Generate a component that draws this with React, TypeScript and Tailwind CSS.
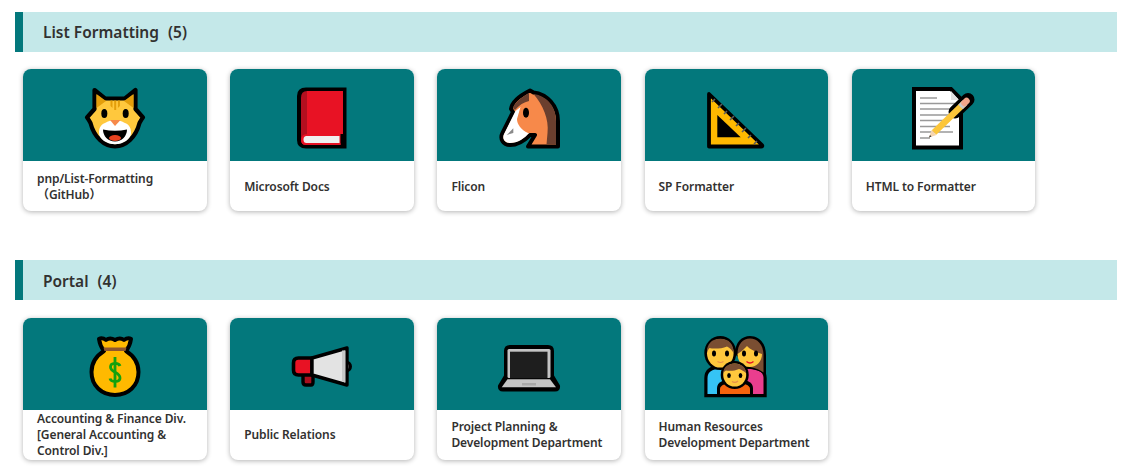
import type { ReactNode } from 'react'

const Svg = ({ children }: { children: ReactNode }) => (
  <svg viewBox="0 0 72 72" className="w-[72px] h-[72px]">
    {children}
  </svg>
)

const CatIcon = () => (
  <Svg>
    <path d="M15.5 11 L26 19.5 H46 L56.5 11 V30 L64 38.5 Q62 41 60.5 44 C57 58 47 67.3 36 67.3 C25 67.3 15 58 11.5 44 Q10 41 8 38.5 L15.5 30 Z" fill="#ffc83d" stroke="#000" strokeWidth="4.2" strokeLinejoin="round" />
    <path d="M17.5 15 L27 22 L17.5 29 Z M54.5 15 L45 22 L54.5 29 Z" fill="#e39e0b" />
    <path d="M31.5 21.5 H33.5 V29 L31.5 27 Z M35.2 21.5 H37.2 V31 H35.2 Z M38.9 21.5 H40.9 V27 L38.9 29 Z" fill="#e39e0b" />
    <ellipse cx="25.3" cy="34.5" rx="3" ry="4.5" fill="#000" />
    <ellipse cx="46.7" cy="34.5" rx="3" ry="4.5" fill="#000" />
    <path d="M36 41 C30 41 29 43 26 44 C21 46 20 50 20 54 C20 60 28 65.3 36 65.3 C44 65.3 52 60 52 54 C52 50 51 46 46 44 C43 43 42 41 36 41 Z" fill="#fff" />
    <path d="M31 41 H41.5 L36 47 Z" fill="#f7894a" />
    <path d="M24 50.5 Q36 53 48 50.5 C48 57 43 62.5 36 62.5 C29 62.5 24 57 24 50.5 Z" fill="#000" />
    <ellipse cx="36" cy="59" rx="6" ry="3" fill="#e8421f" />
  </Svg>
)

const BookIcon = () => (
  <Svg>
    <path d="M20 8.5 H60.5 V69.5 H20 Q11 69.5 11 61 V17 Q11 8.5 20 8.5 Z" fill="#000" />
    <path d="M21 12 H57 V55 H21 Z" fill="#e81224" />
    <path d="M21 12 Q15 12 15 19 V61 Q15 66 20 66 H54.5 V64 H21 L18 61 V58 L21 55 Z" fill="#b30f1f" />
    <path d="M21 55 H54.5 V66 H20 Q15 66 15 61 Q15 55 21 55 Z" fill="#e81224" />
    <path d="M20.5 57 H53.5 V64 H20.5 Q17.5 64 17.5 60.5 Q17.5 57 20.5 57 Z" fill="#f0f0f0" />
  </Svg>
)

const HorseIcon = () => (
  <Svg>
    <path d="M37 11.5 L40.5 13.5 C54 15 65 27 65 42 V67.5 H35 L42 56 H37 C33 60 26 66 17 66 C10 66 6.5 60 9.5 54 L20 33 L18 30 C19 22 28 16 37 11.5 Z" fill="#f7894a" stroke="#000" strokeWidth="4" strokeLinejoin="round" />
    <path d="M40.5 15 C54 17 63 27 63 42 V65.5 H53.5 L54.5 54 C56 40 50 26 40.5 15 Z" fill="#6b3f2e" />
    <path d="M20 29 C22 23 29 18 36 14 V22 C31 23 26 26 22 31 Z" fill="#6b3f2e" />
    <path d="M22.5 32 L27.5 28 L24 40 C24 45 28 51 35 54 H36 C32 59 25 64 17 64 C11 64 9 59 11 55 Z" fill="#fff" />
    <path d="M13.7 56 L20.3 49.3 V54 Z" fill="#8a8a8a" />
    <ellipse cx="33" cy="33.7" rx="3" ry="5" fill="#000" />
  </Svg>
)

const RulerIcon = () => (
  <Svg>
    <path d="M9 15 L62 66 Q63 67.5 61 67.5 H9 Z" fill="#ffb900" stroke="#000" strokeWidth="3.8" strokeLinejoin="round" />
    <path d="M17.3 36 V58.3 H40.7 Z" fill="#000" />
    <path d="M12 23 L15 20 M18 29 L22 25 M24 35 L27 32 M30 41 L34 37 M36 47 L39 44 M42 53 L46 49 M48 59 L51 56 M54 65 L57 62" stroke="#5c5c5c" strokeWidth="1.6" />
  </Svg>
)

const DocIcon = () => (
  <Svg>
    <path d="M6 10 H43 L53 20 V68.5 H6 Z" fill="#fff" stroke="#000" strokeWidth="4" />
    <path d="M43 12 V21 H51 Z" fill="#e1e1e1" />
    <path d="M12 19 H29 M12 24.5 H47 M12 30 H42 M12 36 H47 M12 41.5 H42 M12 47.5 H42 M12 53 H45 M12 59 H22" stroke="#999" strokeWidth="1.7" />
    <path d="M47 33 L60 20.5" stroke="#000" strokeWidth="13" strokeLinecap="round" />
    <path d="M26 53.5 L56 24.5" stroke="#fcc63a" strokeWidth="6.5" />
    <path d="M52.5 28 L57 23.7" stroke="#c9c9c9" strokeWidth="6.5" />
    <path d="M56.5 24 L58.5 22" stroke="#f0a58a" strokeWidth="6.5" strokeLinecap="round" />
    <path d="M23.5 51 L28.5 56 L21 58.5 Z" fill="#f5d5b0" />
    <path d="M22 56 L23.5 57.5 L21 58.5 Z" fill="#333" />
  </Svg>
)

const BagIcon = () => (
  <Svg>
    <path d="M20 11 Q23 9 27 12 Q31 9 36 12 Q41 9 45 12 Q49 9 52 11 Q51 18 47 23 C55 28 59.5 35 59.5 44 C59.5 58 49 67 36 67 C23 67 12.5 58 12.5 44 C12.5 35 17 28 25 23 Q21 18 20 11 Z" fill="#ffb900" stroke="#000" strokeWidth="4" strokeLinejoin="round" />
    <path d="M24.5 19.5 H47.5 L46.5 23 H25.5 Z" fill="#8e562e" />
    <path d="M41 38 C40 34.5 31.5 34 31.5 39 C31.5 45 41 43.5 41 50 C41 54.5 32 54.5 31 50.5" fill="none" stroke="#13a10e" strokeWidth="2.8" />
    <path d="M36 29 V59.5" stroke="#13a10e" strokeWidth="2.8" />
  </Svg>
)

const MegaphoneIcon = () => (
  <Svg>
    <circle cx="60" cy="38.5" r="4.5" fill="#b5b5b5" stroke="#000" strokeWidth="3" />
    <path d="M17 46 V54 Q17 57 20 57 H25 Q27 57 27 54 V46 Z" fill="#a80f1e" stroke="#000" strokeWidth="3.4" strokeLinejoin="round" />
    <path d="M26 30 H12.5 Q7.5 30 7.5 35 V42 Q7.5 47 12.5 47 H26 Z" fill="#e81224" stroke="#000" strokeWidth="3.6" strokeLinejoin="round" />
    <path d="M26 30 L61 20 V57 L26 47 Z" fill="#e3e3e3" stroke="#000" strokeWidth="3.4" strokeLinejoin="round" />
    <path d="M56 22.5 H59.3 V54.5 L56 53.5 Z" fill="#c8c8c8" />
  </Svg>
)

const LaptopIcon = () => (
  <Svg>
    <path d="M17 19 H55 Q59 19 59 23 V48 L65 58 Q65.5 61.5 62 61.5 H10 Q6.5 61.5 7 58 L13 48 V23 Q13 19 17 19 Z" fill="#000" stroke="#000" strokeWidth="4" strokeLinejoin="round" />
    <rect x="14.5" y="21" width="43" height="29" rx="1.5" fill="#c4c4c4" />
    <rect x="17" y="23.7" width="37.5" height="26.5" fill="#1e1e1e" />
    <path d="M14.5 51.3 H57 L63 59.3 H8.7 Z" fill="#c4c4c4" />
    <rect x="29" y="55" width="14" height="2.5" fill="#a8a8a8" />
  </Svg>
)

const FamilyIcon = () => (
  <Svg>
    <path d="M6 67.5 V50 C6 43 11 39 20 39 H50 C58 39 65 43 65 50 V67.5 Z" fill="#000" stroke="#000" strokeWidth="3.4" />
    <path d="M7.5 66 V50 C7.5 44 12 41 20 41 H30 V66 Z" fill="#35c4f5" />
    <path d="M38 41 H52 C60 42 63.5 45 63.5 50 V66 H38 Z" fill="#ea3e8e" />
    {/* mother hair falls behind the shoulder */}
    <path d="M35 26 C35 14 42 8 50 8 C58 8 66 14 66 27 V48 C62 44 58 42 50 41 Z" fill="#000" />
    <path d="M37.5 26 C37.5 16 43 10.5 50 10.5 C57 10.5 63.5 16 63.5 27 V44.5 C60 42 56 40 50 39 Z" fill="#7a4e32" />
    <ellipse cx="20.3" cy="25" rx="16" ry="17" fill="#000" />
    <ellipse cx="20.3" cy="25.3" rx="13.3" ry="14.3" fill="#ffc83d" />
    <path d="M7 25 C6.5 16 12 10.8 20.3 10.8 C28.5 10.8 34 16 33.6 25 C32 22 30 20 27 18.5 C21 21 13 21 9.5 20 C8 21.5 7.5 23 7 25 Z" fill="#7a4e32" />
    <path d="M37.5 26 C41 24 44 21 47 18 C50 21.5 56 24 62 26 C62 33 57 39 49.7 39 C42 39 37.5 33 37.5 26 Z" fill="#ffc83d" />
    <ellipse cx="14" cy="25.6" rx="2" ry="3" fill="#000" />
    <ellipse cx="27" cy="25.6" rx="2" ry="3" fill="#000" />
    <ellipse cx="44" cy="25.6" rx="2" ry="3" fill="#000" />
    <ellipse cx="56" cy="25.6" rx="2" ry="3" fill="#000" />
    <path d="M17.5 33.5 Q20.5 35.5 23.5 33.5" fill="none" stroke="#e8904a" strokeWidth="1.2" />
    <path d="M46.5 33.5 Q50 36.5 53.5 33.5" fill="none" stroke="#e81224" strokeWidth="1.4" />
    <path d="M17 69 V60 C17 54 24 51 35 51 C46 51 53 54 53 60 V69 Z" fill="#000" />
    <path d="M20 66 V61 C20 57 26 55 35 55 C44 55 50 57 50 61 V66 Z" fill="#f7630c" />
    <circle cx="34.7" cy="47" r="14" fill="#000" />
    <circle cx="34.7" cy="47" r="11.5" fill="#ffc83d" />
    <path d="M23.3 45 C23.5 39 28 35.5 34.7 35.5 C41 35.5 46 39 46.1 45 C43.5 43 41 41.5 39 41 C35 43 29 43 26 42.5 C25 43 24 44 23.3 45 Z" fill="#7a4e32" />
    <ellipse cx="29" cy="47.5" rx="1.8" ry="2.5" fill="#000" />
    <ellipse cx="40.5" cy="47.5" rx="1.8" ry="2.5" fill="#000" />
    <path d="M32 53.5 Q35 55.5 38 53" fill="none" stroke="#e8904a" strokeWidth="1.2" />
  </Svg>
)

const Card = ({ icon, title }: { icon: ReactNode; title: ReactNode }) => (
  <div className="w-[183.5px] h-[142px] rounded-lg bg-white overflow-hidden shadow-[0_1px_5px_rgba(0,0,0,0.3)]">
    <div className="h-[92px] bg-[#03787c] flex justify-center pt-[10px]">{icon}</div>
    <div className="h-[50px] px-[14px] pt-px flex items-center text-[12px] tracking-[-0.1px] leading-4 font-semibold text-[#323130]">
      <p>{title}</p>
    </div>
  </div>
)

const Section = ({ title, count, children }: { title: string; count: number; children: ReactNode }) => (
  <section>
    <div className="h-10 bg-[#c4e8e9] border-l-8 border-[#03787c] pl-5 pt-[2px] flex items-center text-[15.5px] font-semibold text-[#323130]">
      <span>{title}</span>
      <span className="ml-[9px]">({count})</span>
    </div>
    <div className="flex gap-[23.7px] mt-[17.4px] pl-2">{children}</div>
  </section>
)

export default function App() {
  return (
    <div className="min-h-screen bg-white pt-3 pl-[15px] pr-[13px] flex flex-col gap-[49px] font-['Noto_Sans','Noto_Sans_CJK_JP',sans-serif]">
      <Section title="List Formatting" count={5}>
        <Card icon={<CatIcon />} title="pnp/List-Formatting （GitHub）" />
        <Card icon={<BookIcon />} title="Microsoft Docs" />
        <Card icon={<HorseIcon />} title="Flicon" />
        <Card icon={<RulerIcon />} title="SP Formatter" />
        <Card icon={<DocIcon />} title="HTML to Formatter" />
      </Section>
      <Section title="Portal" count={4}>
        <Card icon={<BagIcon />} title="Accounting & Finance Div. [General Accounting & Control Div.]" />
        <Card icon={<MegaphoneIcon />} title="Public Relations" />
        <Card icon={<LaptopIcon />} title="Project Planning & Development Department" />
        <Card icon={<FamilyIcon />} title="Human Resources Development Department" />
      </Section>
    </div>
  )
}
